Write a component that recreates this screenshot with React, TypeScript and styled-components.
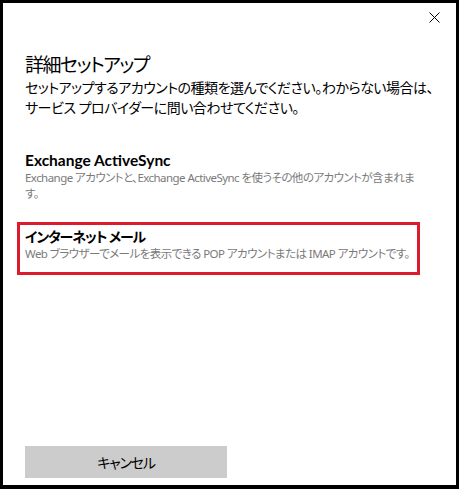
import React from "react";
import styled, { createGlobalStyle } from "styled-components";

const Global = createGlobalStyle`
  html, body { margin: 0; padding: 0; background: #000; }
  body { width: 459px; height: 489px; overflow: hidden; }
  * { box-sizing: border-box; }
`;

const Frame = styled.div`
  width: 459px;
  height: 489px;
  background: #000;
  padding: 3px 3px 4px 3px;
  font-family: "Noto Sans", "Noto Sans CJK JP", sans-serif;
  font-feature-settings: "palt";
`;

const Dialog = styled.div`
  width: 100%;
  height: 100%;
  background: #fff;
  display: flex;
  flex-direction: column;
  color: #000;
`;

const TopBar = styled.div`
  height: 40px;
  display: flex;
  justify-content: flex-end;
  align-items: flex-start;
  padding: 6px 14px 0 0;
`;

const CloseButton = styled.button`
  width: 16px;
  height: 16px;
  border: 0;
  background: transparent;
  padding: 0;
  display: flex;
  align-items: center;
  justify-content: center;
`;

const Content = styled.div`
  flex: 1;
  display: flex;
  flex-direction: column;
  padding: 9px 0 0 22px;
`;

const Title = styled.h1`
  margin: 0;
  font-size: 19px;
  font-weight: 400;
  line-height: 26px;
  letter-spacing: -1.5px;
`;

const Subtitle = styled.p`
  margin: 0;
  font-size: 14px;
  line-height: 20px;
  width: 410px;
  letter-spacing: -0.5px;
`;

const OptionList = styled.div`
  display: flex;
  flex-direction: column;
  margin-top: 27px;
  gap: 8px;
`;

const Option = styled.div<{ $selected?: boolean }>`
  width: 403px;
  margin-left: -8px;
  padding: ${(p) => (p.$selected ? "2px 0 10px 5px" : "6px 0 12px 8px")};
  border: ${(p) => (p.$selected ? "3px solid #dc1c2c" : "0")};
`;

const OptionTitle = styled.div<{ $ja?: boolean }>`
  font-family: Lato, "Noto Sans CJK JP", sans-serif;
  font-size: ${(p) => (p.$ja ? "14px" : "15.5px")};
  font-weight: 700;
  line-height: 19px;
  letter-spacing: ${(p) => (p.$ja ? "-1.1px" : "0")};
`;

const OptionDesc = styled.div`
  font-size: 11.5px;
  line-height: 16px;
  color: #7a7a7a;
  letter-spacing: -0.55px;
`;

const Footer = styled.div`
  padding: 0 0 7px 22px;
`;

const CancelButton = styled.button`
  width: 202px;
  height: 32px;
  border: 0;
  background: #cccccc;
  font-family: inherit;
  font-feature-settings: "palt";
  font-size: 14px;
  letter-spacing: -1.2px;
  color: #000;
  padding: 0;
`;

export default function App() {
  return (
    <>
      <Global />
      <Frame>
        <Dialog>
          <TopBar>
            <CloseButton aria-label="閉じる">
              <svg width="11" height="11" viewBox="0 0 11 11">
                <path d="M0.5 0.5 L10.5 10.5 M10.5 0.5 L0.5 10.5" stroke="#000" strokeWidth="1" />
              </svg>
            </CloseButton>
          </TopBar>
          <Content>
            <Title>詳細セットアップ</Title>
            <Subtitle>
              セットアップするアカウントの種類を選んでください。わからない場合は、サービス プロバイダーに問い合わせてください。
            </Subtitle>
            <OptionList>
              <Option>
                <OptionTitle>Exchange ActiveSync</OptionTitle>
                <OptionDesc>
                  Exchange アカウントと、Exchange ActiveSync を使うその他のアカウントが含まれます。
                </OptionDesc>
              </Option>
              <Option $selected>
                <OptionTitle $ja>インターネット メール</OptionTitle>
                <OptionDesc>
                  Web ブラウザーでメールを表示できる POP アカウントまたは IMAP アカウントです。
                </OptionDesc>
              </Option>
            </OptionList>
          </Content>
          <Footer>
            <CancelButton>キャンセル</CancelButton>
          </Footer>
        </Dialog>
      </Frame>
    </>
  );
}
